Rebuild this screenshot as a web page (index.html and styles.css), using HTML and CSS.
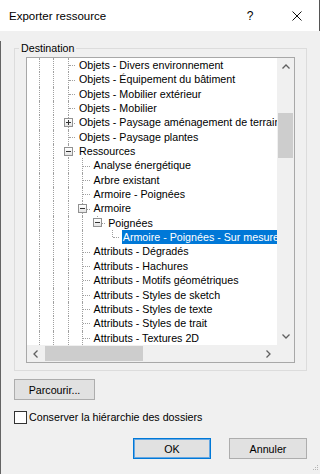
FILE: index.html
```html
<!DOCTYPE html>
<html lang="fr">
<head>
  <meta charset="UTF-8">
  <title>Exporter ressource</title>
  <link rel="stylesheet" href="styles.css">
</head>
<body>
  <div class="dialog">
    <div class="titlebar">
      <span class="title">Exporter ressource</span>
      <span class="help">?</span>
      <span class="close">
        <svg width="10" height="10" viewBox="0 0 10 10"><path d="M0.5 0.5 L9.5 9.5 M9.5 0.5 L0.5 9.5" stroke="#111" stroke-width="1" fill="none"/></svg>
      </span>
    </div>

    <div class="content">
      <fieldset class="group">
        <legend>Destination</legend>
        <div class="treebox">
          <div class="tree-main">
            <div class="tree">
              <div class="row"><span class="g i"></span><span class="g i"></span><span class="g t"></span><span class="lbl">Objets - Divers environnement</span></div>
              <div class="row"><span class="g i"></span><span class="g i"></span><span class="g t"></span><span class="lbl">Objets - Équipement du bâtiment</span></div>
              <div class="row"><span class="g i"></span><span class="g i"></span><span class="g t"></span><span class="lbl">Objets - Mobilier extérieur</span></div>
              <div class="row"><span class="g i"></span><span class="g i"></span><span class="g t"></span><span class="lbl">Objets - Mobilier</span></div>
              <div class="row"><span class="g i"></span><span class="g i"></span><span class="g t"><span class="exp plus"></span></span><span class="lbl">Objets - Paysage aménagement de terrain</span></div>
              <div class="row"><span class="g i"></span><span class="g i"></span><span class="g t"></span><span class="lbl">Objets - Paysage plantes</span></div>
              <div class="row"><span class="g i"></span><span class="g i"></span><span class="g t"><span class="exp"></span></span><span class="lbl">Ressources</span></div>
              <div class="row"><span class="g i"></span><span class="g i"></span><span class="g i"></span><span class="g t"></span><span class="lbl">Analyse énergétique</span></div>
              <div class="row"><span class="g i"></span><span class="g i"></span><span class="g i"></span><span class="g t"></span><span class="lbl">Arbre existant</span></div>
              <div class="row"><span class="g i"></span><span class="g i"></span><span class="g i"></span><span class="g t"></span><span class="lbl">Armoire - Poignées</span></div>
              <div class="row"><span class="g i"></span><span class="g i"></span><span class="g i"></span><span class="g t"><span class="exp"></span></span><span class="lbl">Armoire</span></div>
              <div class="row"><span class="g i"></span><span class="g i"></span><span class="g i"></span><span class="g i"></span><span class="g l"><span class="exp"></span></span><span class="lbl">Poignées</span></div>
              <div class="row"><span class="g i"></span><span class="g i"></span><span class="g i"></span><span class="g i"></span><span class="g"></span><span class="g l"></span><span class="lbl selected">Armoire - Poignées - Sur mesure</span></div>
              <div class="row"><span class="g i"></span><span class="g i"></span><span class="g i"></span><span class="g t"></span><span class="lbl">Attributs - Dégradés</span></div>
              <div class="row"><span class="g i"></span><span class="g i"></span><span class="g i"></span><span class="g t"></span><span class="lbl">Attributs - Hachures</span></div>
              <div class="row"><span class="g i"></span><span class="g i"></span><span class="g i"></span><span class="g t"></span><span class="lbl">Attributs - Motifs géométriques</span></div>
              <div class="row"><span class="g i"></span><span class="g i"></span><span class="g i"></span><span class="g t"></span><span class="lbl">Attributs - Styles de sketch</span></div>
              <div class="row"><span class="g i"></span><span class="g i"></span><span class="g i"></span><span class="g t"></span><span class="lbl">Attributs - Styles de texte</span></div>
              <div class="row"><span class="g i"></span><span class="g i"></span><span class="g i"></span><span class="g t"></span><span class="lbl">Attributs - Styles de trait</span></div>
              <div class="row"><span class="g i"></span><span class="g i"></span><span class="g i"></span><span class="g t"></span><span class="lbl">Attributs - Textures 2D</span></div>
            </div>
            <div class="vscroll">
              <div class="sb-btn"><svg width="8" height="5" viewBox="0 0 8 5"><polyline points="0.5,4.5 4,1 7.5,4.5" fill="none" stroke="#606060" stroke-width="1.3"/></svg></div>
              <div class="vtrack"><div class="vthumb"></div></div>
              <div class="sb-btn"><svg width="8" height="5" viewBox="0 0 8 5"><polyline points="0.5,0.5 4,4 7.5,0.5" fill="none" stroke="#606060" stroke-width="1.3"/></svg></div>
            </div>
          </div>
          <div class="hscroll-row">
            <div class="hscroll">
              <div class="sb-btn"><svg width="5" height="8" viewBox="0 0 5 8"><polyline points="4.5,0.5 1,4 4.5,7.5" fill="none" stroke="#606060" stroke-width="1.3"/></svg></div>
              <div class="htrack"><div class="hthumb"></div></div>
              <div class="sb-btn"><svg width="5" height="8" viewBox="0 0 5 8"><polyline points="0.5,0.5 4,4 0.5,7.5" fill="none" stroke="#606060" stroke-width="1.3"/></svg></div>
            </div>
            <div class="sb-corner"></div>
          </div>
        </div>
      </fieldset>

      <button class="btn browse">Parcourir...</button>

      <label class="check"><span class="checkbox"></span>Conserver la hiérarchie des dossiers</label>

      <div class="actions">
        <button class="btn default">OK</button>
        <button class="btn">Annuler</button>
      </div>
    </div>

    <svg class="grip" width="6" height="6" viewBox="0 0 6 6">
      <rect x="4" y="0" width="1" height="1" fill="#b5b5b5"/>
      <rect x="2" y="2" width="1" height="1" fill="#b5b5b5"/>
      <rect x="4" y="2" width="1" height="1" fill="#b5b5b5"/>
      <rect x="0" y="4" width="1" height="1" fill="#b5b5b5"/>
      <rect x="2" y="4" width="1" height="1" fill="#b5b5b5"/>
      <rect x="4" y="4" width="1" height="1" fill="#b5b5b5"/>
    </svg>
  </div>
</body>
</html>
```

FILE: styles.css
```css
body {
  margin: 0;
  font-family: "Liberation Sans", Arial, sans-serif;
  font-size: 10.7px;
  color: #000;
}

.dialog {
  position: relative;
  width: 320px;
  height: 474px;
  background-color: #f0f0f0;
  overflow: hidden;
}

/* title bar */
.titlebar {
  display: flex;
  align-items: center;
  box-sizing: border-box;
  height: 31px;
  background-color: #fff;
  border-right: 1px solid #555;
}

.title {
  padding-left: 9px;
  font-size: 11.5px;
  color: #000;
}

.help {
  margin-left: auto;
  width: 20px;
  text-align: center;
  font-size: 12px;
}

.close {
  display: flex;
  justify-content: center;
  width: 20px;
  margin-left: 27px;
  margin-right: 12px;
}

.content {
  height: 443px;
  border-left: 1px solid #646464;
  padding-left: 13px;
  box-sizing: border-box;
}

/* group box */
.group {
  box-sizing: border-box;
  width: 293px;
  margin: 10px 0 0 0;
  padding: 2px 11px 7px 4px;
  border: 1px solid #dcdcdc;
  min-width: 0;
}

.group legend {
  padding: 0 2px;
  line-height: 14px;
}

.treebox {
  width: 269px;
  margin-left: 7px;
  box-sizing: border-box;
  border: 1px solid #a8a8a8;
  background-color: #fff;
}

.tree-main {
  display: flex;
  height: 287px;
}

.tree {
  flex: 1;
  overflow: hidden;
}

.row {
  display: flex;
  height: 14.35px;
  padding-left: 4.7px;
  white-space: nowrap;
}

/* tree guide columns */
.g {
  position: relative;
  flex-shrink: 0;
  width: 14.6px;
}

.g.i::before,
.g.t::before,
.g.l::before {
  content: '';
  position: absolute;
  left: 7px;
  top: 0;
  bottom: 0;
  border-left: 1px dotted #a0a0a0;
}

.g.l::before {
  bottom: 50%;
}

.g.t::after,
.g.l::after {
  content: '';
  position: absolute;
  left: 8px;
  right: 0;
  top: 50%;
  border-top: 1px dotted #a0a0a0;
}

.exp {
  position: absolute;
  z-index: 1;
  left: 3px;
  top: calc(50% - 4.5px);
  width: 9px;
  height: 9px;
  box-sizing: border-box;
  border: 1px solid #919191;
  background: linear-gradient(#fff, #e4e4e4);
}

.exp::before {
  content: '';
  position: absolute;
  left: 1px;
  top: 3px;
  width: 5px;
  height: 1px;
  background-color: #333;
}

.exp.plus::after {
  content: '';
  position: absolute;
  left: 3px;
  top: 1px;
  width: 1px;
  height: 5px;
  background-color: #333;
}

.lbl {
  margin-left: 2.5px;
  padding: 0 1px;
  line-height: 14.35px;
  color: #000;
}

.lbl.selected {
  background-color: #0078d7;
  color: #fff;
  padding-right: 4px;
}

/* scrollbars */
.vscroll {
  display: flex;
  flex-direction: column;
  width: 17px;
  background-color: #f0f0f0;
}

.sb-btn {
  display: flex;
  align-items: center;
  justify-content: center;
  width: 17px;
  height: 17px;
  flex-shrink: 0;
}

.vtrack {
  flex: 1;
  padding-top: 38px;
}

.vthumb {
  width: 15px;
  height: 45px;
  margin-left: 1px;
  background-color: #cdcdcd;
}

.hscroll-row {
  display: flex;
  height: 17px;
}

.hscroll {
  flex: 1;
  display: flex;
  background-color: #f0f0f0;
}

.htrack {
  flex: 1;
  padding-left: 1px;
}

.hthumb {
  width: 98px;
  height: 15px;
  margin-top: 1px;
  background-color: #cdcdcd;
}

.sb-corner {
  width: 17px;
  background-color: #f0f0f0;
}

/* buttons */
.btn {
  box-sizing: border-box;
  height: 21px;
  padding: 0;
  font-family: inherit;
  font-size: 10.7px;
  color: #000;
  background-color: #e1e1e1;
  border: 1px solid #adadad;
}

.browse {
  display: block;
  width: 81px;
  margin-top: 8px;
}

.check {
  display: flex;
  align-items: center;
  height: 14px;
  margin-top: 10px;
}

.checkbox {
  box-sizing: border-box;
  width: 13px;
  height: 13px;
  margin-right: 2px;
  background-color: #fff;
  border: 1px solid #333;
}

.actions {
  display: flex;
  justify-content: flex-end;
  gap: 18px;
  margin-top: 14px;
  padding-right: 13px;
}

.actions .btn {
  width: 78px;
}

.btn.default {
  border-color: #0078d7;
  box-shadow: inset 0 0 0 1px #66a8e3;
}

.grip {
  position: absolute;
  right: 1px;
  bottom: 3px;
}
```
